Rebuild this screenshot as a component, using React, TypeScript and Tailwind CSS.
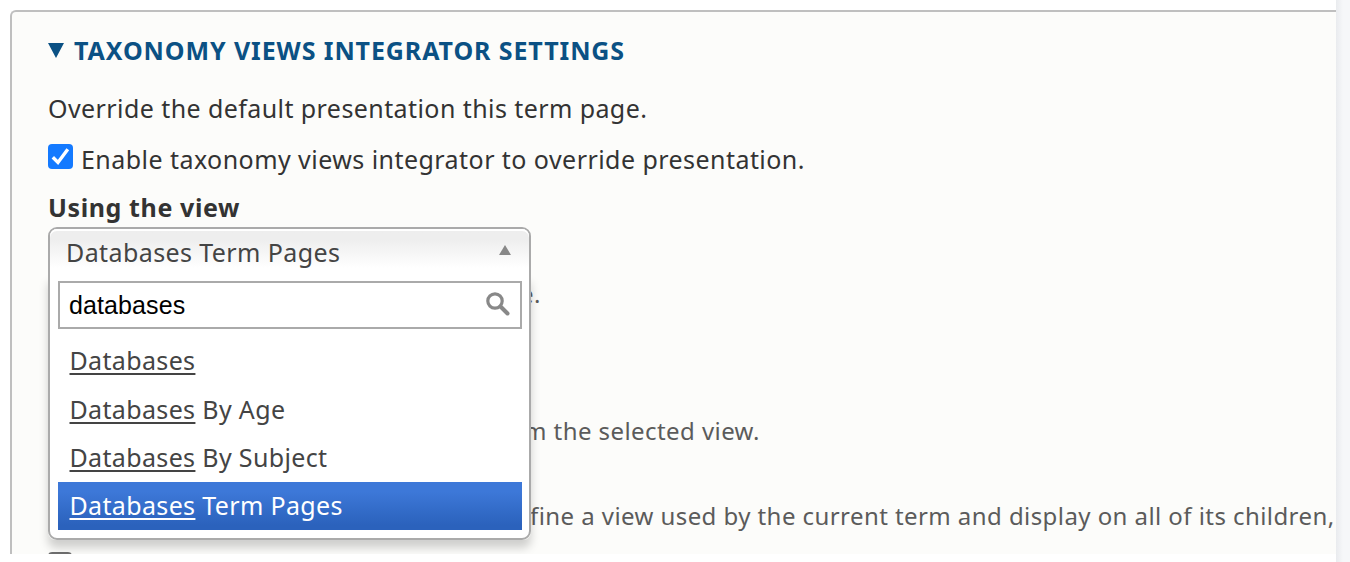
type Option = { match: string; rest: string; selected?: boolean };

const options: Option[] = [
  { match: "Databases", rest: "" },
  { match: "Databases", rest: " By Age" },
  { match: "Databases", rest: " By Subject" },
  { match: "Databases", rest: " Term Pages", selected: true },
];

function ViewSelect() {
  return (
    <div className="relative z-10 h-0 shrink-0">
      <div className="absolute left-0 top-0 w-[483px] text-[25px] text-[#444]">
        <div className="absolute inset-x-0 bottom-0 top-12 rounded-b-[8px] shadow-[0_8px_10px_rgba(0,0,0,0.18)]" />
        <div className="relative h-[313px] rounded-[9px] border-2 border-[#aaa] bg-white">
          <div className="flex h-[52px] items-center justify-between rounded-t-[7px] bg-linear-to-b from-[#eeeeee] from-20% to-white to-75% pl-4 pr-[18px] shadow-[inset_0_2px_0_#fff]">
            <span className="mb-[7px] whitespace-nowrap tracking-[0.4px]">Databases Term Pages</span>
            <svg className="mb-[10px] h-[10px] w-3" viewBox="0 0 12 10">
              <path d="M6 0 12 10H0Z" fill="#888" />
            </svg>
          </div>
          <div className="ml-2 mr-[7.5px] flex h-12 items-center justify-between border-2 border-[#aaa] bg-white pl-[9px] pr-[10px]">
            <span className="font-['Liberation_Sans',sans-serif] tracking-[0.1px] text-black">databases</span>
            <svg className="mb-0.5 h-6 w-6" viewBox="0 0 24 24" fill="none" stroke="#888">
              <circle cx="9" cy="9" r="7.2" strokeWidth="3.2" />
              <path d="m14.5 14.5 7 7" strokeWidth="4" strokeLinecap="round" />
            </svg>
          </div>
          <ul className="ml-2 mr-[7.5px] mt-[7.5px]">
            {options.map((o) => (
              <li
                key={o.rest}
                className={
                  "flex h-[48.4px] items-center whitespace-pre pb-px pl-[11.5px] tracking-[0.35px] " +
                  (o.selected ? "bg-linear-to-b from-[#3d78d8] from-20% to-[#2b62bc] to-90% text-white" : "")
                }
              >
                <span className="underline decoration-2 underline-offset-[3px]">{o.match}</span>
                {o.rest}
              </li>
            ))}
          </ul>
        </div>
      </div>
    </div>
  );
}

export default function App() {
  return (
    <div className="flex h-[562px] w-[1350px] overflow-hidden bg-white font-['Noto_Sans',sans-serif] text-[25px] leading-8 text-[#333]">
      <div className="h-full w-[1336px] overflow-hidden pl-[10px] pt-[10px]">
        <div className="flex h-[544px] w-[1340px] flex-col overflow-hidden rounded-tl-[6px] border-l-2 border-t-2 border-[#bfbfbf] bg-[#fcfcfa] pl-9">
          <div className="mt-[22px] flex h-8 shrink-0 items-center font-bold text-[#0b5184]">
            <svg className="mr-[10px] h-[15px] w-4" viewBox="0 0 16 15">
              <path d="M0 0H16L8 15Z" fill="currentColor" />
            </svg>
            <span className="tracking-[0.9px]">TAXONOMY VIEWS INTEGRATOR SETTINGS</span>
          </div>
          <p className="mt-[26px] h-8 shrink-0 tracking-[0.42px]">Override the default presentation this term page.</p>
          <div className="mt-[19px] flex h-8 shrink-0 items-center">
            <svg className="mb-[6px] mr-2 h-[25px] w-[25px]" viewBox="0 0 25 25">
              <rect width="25" height="25" rx="4" fill="#147aff" />
              <path d="m4.8 13.2 5.2 5.3L19.8 5.3" fill="none" stroke="#fff" strokeWidth="3.4" />
            </svg>
            <span className="tracking-[0.45px]">Enable taxonomy views integrator to override presentation.</span>
          </div>
          <div className="mb-1 mt-4 h-8 shrink-0 font-bold tracking-[0.6px]">Using the view</div>
          <ViewSelect />
          <div className="flex shrink-0 flex-col whitespace-nowrap text-[24px] tracking-[0.43px] text-[#5b5b5b]">
            <p className="mt-[51px] h-8 pl-[472px]">e.</p>
            <p className="mt-[105px] h-8 pl-[476px]">m the selected view.</p>
            <p className="mt-[53px] h-8 pl-[482px]">fine a view used by the current term and display on all of its children,</p>
          </div>
          <div className="mt-5 h-6 w-6 shrink-0 rounded-[4px] border-2 border-[#6f6f6f] bg-white" />
        </div>
      </div>
      <div className="h-full w-[14px] bg-linear-to-r from-[#e9ebee] to-[#f6f7f9] to-50%" />
    </div>
  );
}
